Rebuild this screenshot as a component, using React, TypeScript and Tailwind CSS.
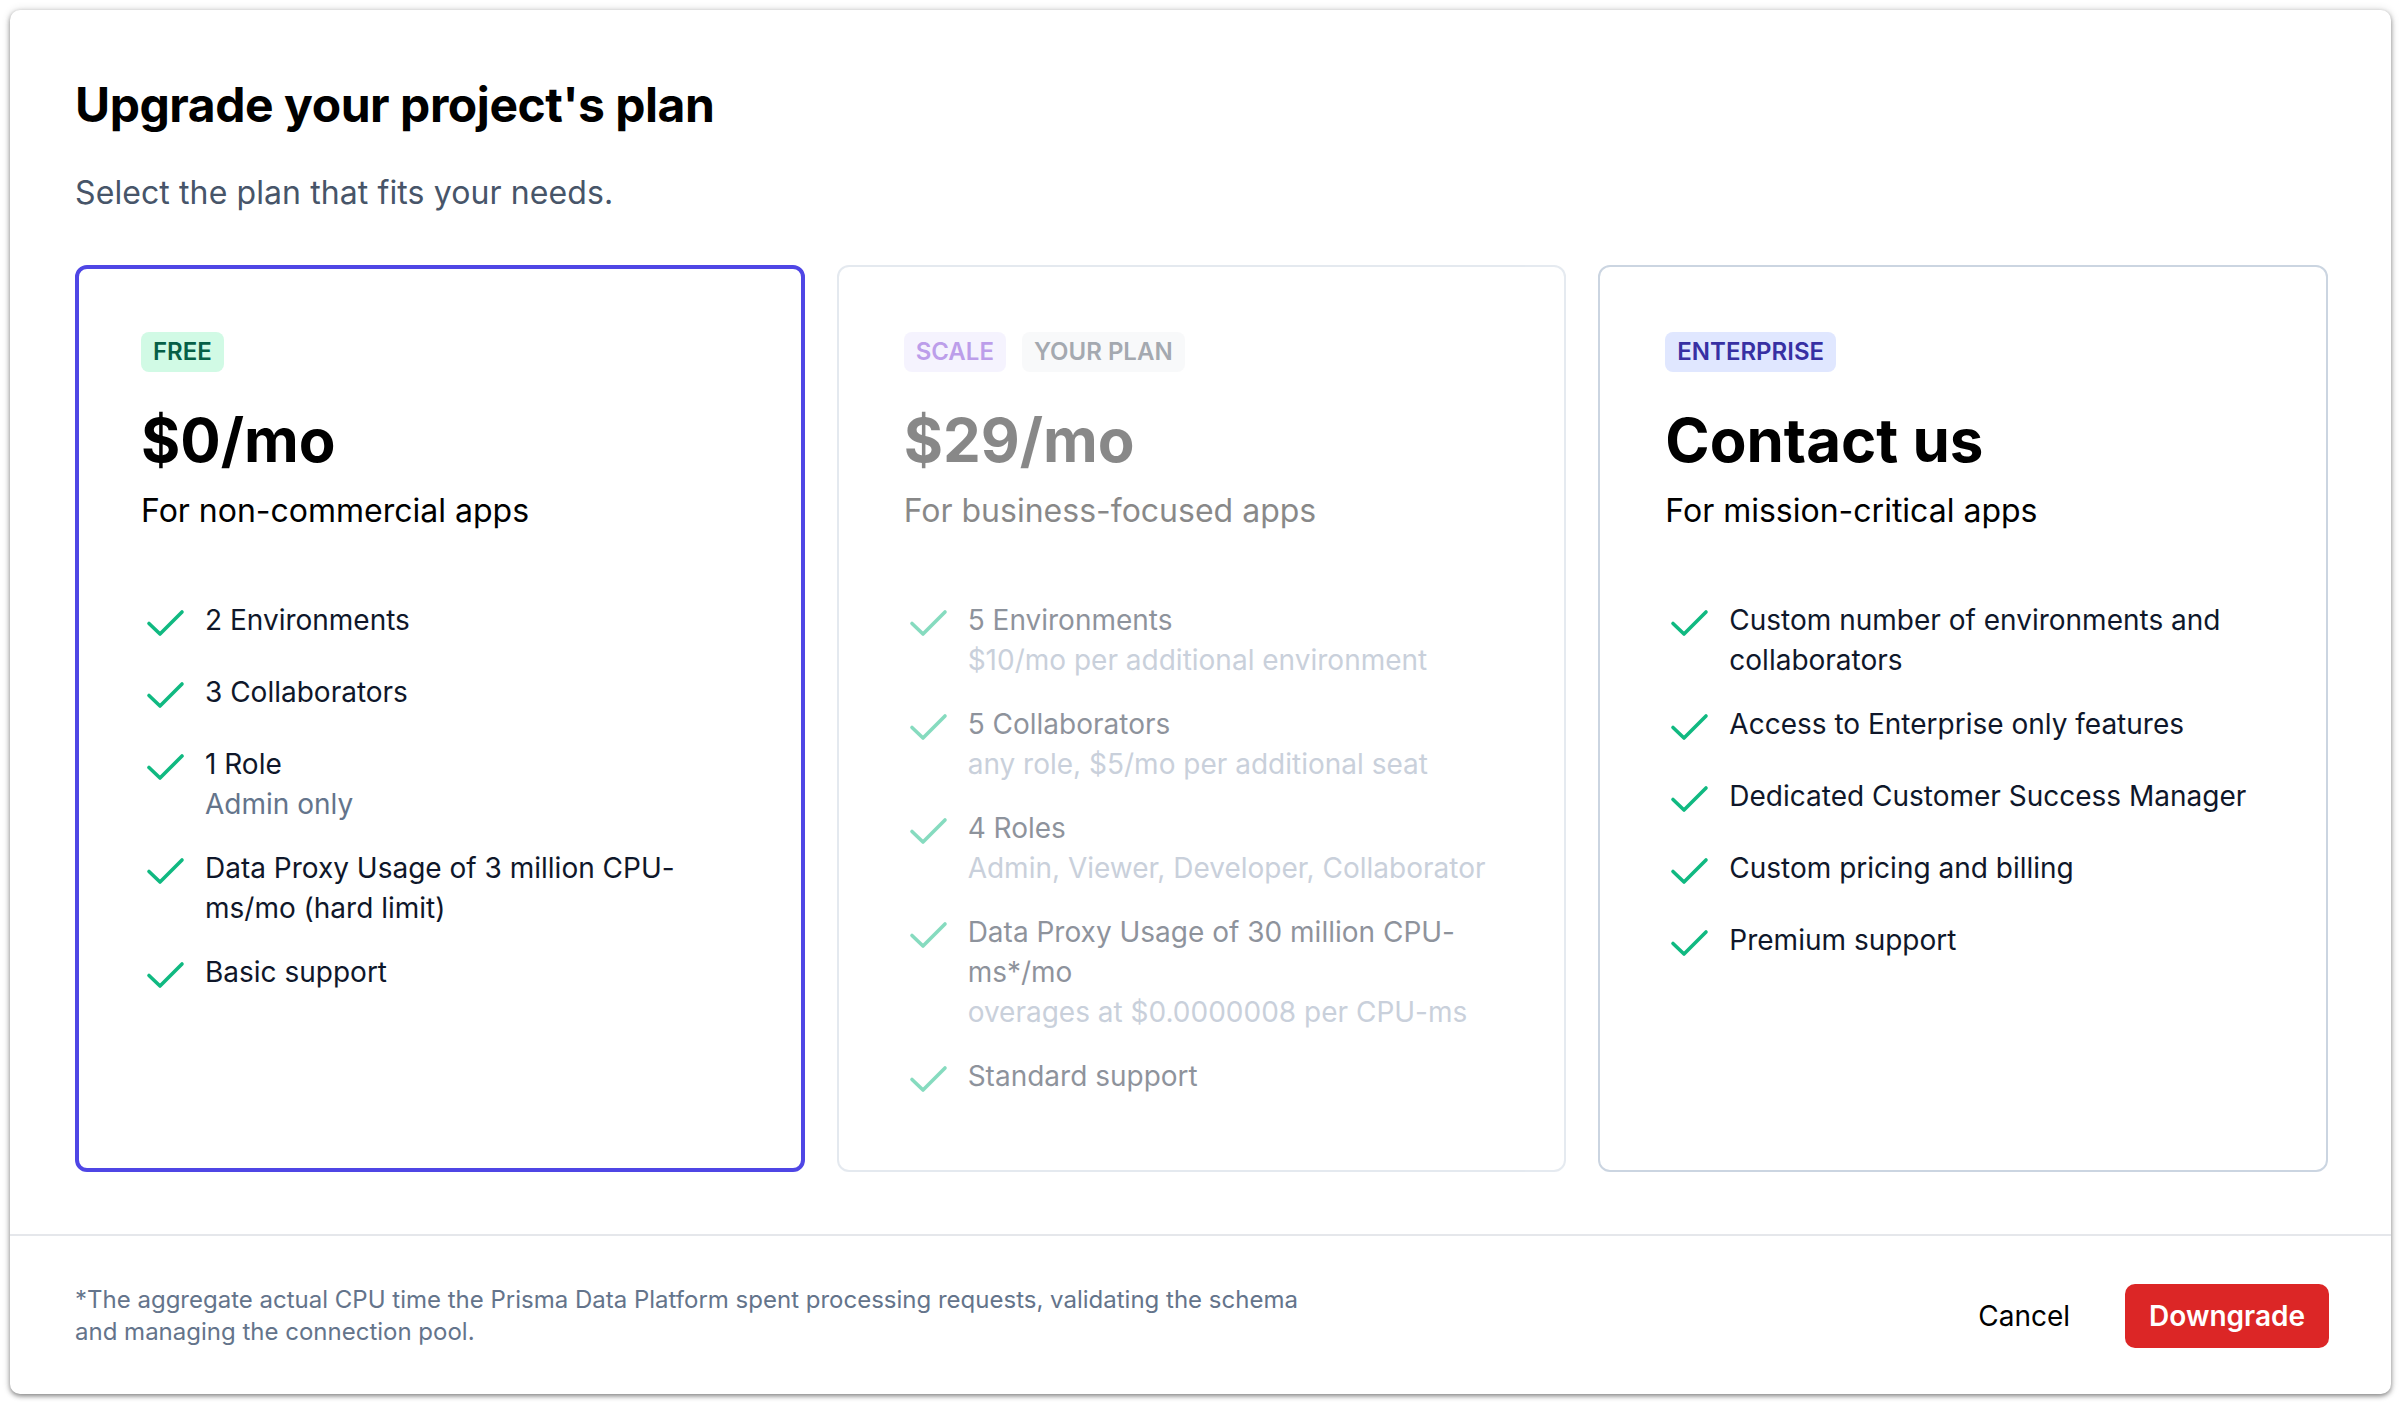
import React from "react";

type Feature = { title: string; sub?: string };

const Check = ({ className }: { className?: string }) => (
  <svg
    viewBox="0 0 24 24"
    fill="none"
    stroke="currentColor"
    strokeWidth={1.8}
    strokeLinecap="round"
    strokeLinejoin="round"
    className={className}
  >
    <path d="M4 11.75l5.5 5.25L20.5 6" />
  </svg>
);

const FeatureList = ({
  items,
  titleClass,
  subClass,
}: {
  items: Feature[];
  titleClass: string;
  subClass: string;
}) => (
  <ul className="mt-[65px] flex flex-col gap-[24px]">
    {items.map((f) => (
      <li key={f.title} className="flex items-start gap-[16px]">
        <Check className="w-[48px] h-[48px] shrink-0 text-[#10b981]" />
        <div className="flex flex-col text-[28px] leading-[40px]">
          <span className={titleClass}>{f.title}</span>
          {f.sub && <span className={subClass}>{f.sub}</span>}
        </div>
      </li>
    ))}
  </ul>
);

export default function App() {
  const free: Feature[] = [
    { title: "2 Environments" },
    { title: "3 Collaborators" },
    { title: "1 Role", sub: "Admin only" },
    { title: "Data Proxy Usage of 3 million CPU-ms/mo (hard limit)" },
    { title: "Basic support" },
  ];
  const scale: Feature[] = [
    { title: "5 Environments", sub: "$10/mo per additional environment" },
    { title: "5 Collaborators", sub: "any role, $5/mo per additional seat" },
    { title: "4 Roles", sub: "Admin, Viewer, Developer, Collaborator" },
    {
      title: "Data Proxy Usage of 30 million CPU-ms*/mo",
      sub: "overages at $0.0000008 per CPU-ms",
    },
    { title: "Standard support" },
  ];
  const enterprise: Feature[] = [
    { title: "Custom number of environments and collaborators" },
    { title: "Access to Enterprise only features" },
    { title: "Dedicated Customer Success Manager" },
    { title: "Custom pricing and billing" },
    { title: "Premium support" },
  ];

  return (
    <div className="w-[2402px] h-[1404px] bg-white p-[10px] font-['Inter','Noto_Sans',sans-serif]">
      <div className="w-[2381px] h-[1384px] bg-white rounded-[10px] shadow-[0_2px_5px_rgba(0,0,0,0.45),0_0_10px_rgba(0,0,0,0.12)] flex flex-col overflow-hidden">
        <section className="pl-[65px] pr-[63px] pt-[63px] pb-[62px]">
          <h1 className="text-[48px] leading-[64px] font-bold tracking-[-0.45px] text-black">
            Upgrade your project's plan
          </h1>
          <p className="mt-[32px] text-[32px] leading-[48px] tracking-[0.1px] text-[#475569]">
            Select the plan that fits your needs.
          </p>

          <div className="mt-[48px] grid grid-cols-3 gap-[32px]">
            {/* Free */}
            <div className="border-[4px] border-[#4f46e5] rounded-[12px] pl-[62px] pr-[62px] pt-[63px] pb-[63px]">
              <div className="flex">
                <span className="px-[12px] py-[4px] rounded-[8px] bg-[#d1fae5] text-[#065f46] text-[24px] leading-[32px] font-semibold uppercase">
                  Free
                </span>
              </div>
              <div className="mt-[32px] text-[60px] leading-[72px] font-bold text-black">
                $0/mo
              </div>
              <div className="mt-[11px] text-[32px] leading-[48px] text-black">
                For non-commercial apps
              </div>
              <FeatureList
                items={free}
                titleClass="text-[#0f172a]"
                subClass="text-[#64748b]"
              />
            </div>

            {/* Scale */}
            <div className="border-[2px] border-[#cbd5e1] rounded-[12px] pl-[65px] pr-[61px] pt-[65px] pb-[66px] opacity-50">
              <div className="flex gap-[16px]">
                <span className="px-[12px] py-[4px] rounded-[8px] bg-[#ede9fe] text-[#7c3fd6] text-[24px] leading-[32px] font-semibold uppercase">
                  Scale
                </span>
                <span className="px-[12px] py-[4px] rounded-[8px] bg-[#f3f4f6] text-[#4b5563] text-[24px] leading-[32px] font-semibold uppercase">
                  Your plan
                </span>
              </div>
              <div className="mt-[32px] text-[60px] leading-[72px] font-bold text-[#141414]">
                $29/mo
              </div>
              <div className="mt-[11px] text-[32px] leading-[48px] text-[#141414]">
                For business-focused apps
              </div>
              <FeatureList
                items={scale}
                titleClass="text-[#1e293b]"
                subClass="text-[#94a3b8]"
              />
            </div>

            {/* Enterprise */}
            <div className="border-[2px] border-[#cbd5e1] rounded-[12px] pl-[65px] pr-[61px] pt-[65px] pb-[66px]">
              <div className="flex">
                <span className="px-[12px] py-[4px] rounded-[8px] bg-[#e0e7ff] text-[#3730a3] text-[24px] leading-[32px] font-semibold uppercase">
                  Enterprise
                </span>
              </div>
              <div className="mt-[32px] text-[60px] leading-[72px] font-bold text-black">
                Contact us
              </div>
              <div className="mt-[11px] text-[32px] leading-[48px] text-black">
                For mission-critical apps
              </div>
              <FeatureList
                items={enterprise}
                titleClass="text-[#0f172a]"
                subClass="text-[#64748b]"
              />
            </div>
          </div>
        </section>

        <footer className="border-t-[2px] border-[#e5e7eb] pl-[65px] pr-[62px] py-[48px] flex items-center justify-between">
          <p className="w-[1250px] text-[24px] leading-[32px] text-[#64748b]">
            *The aggregate actual CPU time the Prisma Data Platform spent processing
            requests, validating the schema and managing the connection pool.
          </p>
          <div className="flex items-center gap-[31px]">
            <button className="px-[24px] py-[12px] text-[28px] leading-[40px] text-black">
              Cancel
            </button>
            <button className="px-[24px] py-[12px] rounded-[10px] bg-[#dc2626] text-white text-[28px] leading-[40px] font-semibold">
              Downgrade
            </button>
          </div>
        </footer>
      </div>
    </div>
  );
}
